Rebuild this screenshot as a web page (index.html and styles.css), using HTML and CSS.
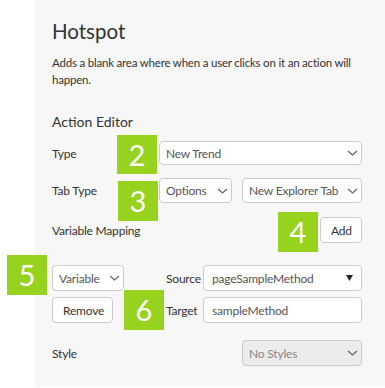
FILE: index.html
```html
<!DOCTYPE html>
<html lang="en">
<head>
  <meta charset="UTF-8" />
  <title>Hotspot</title>
  <link rel="stylesheet" href="styles.css">
</head>
<body>
  <div class="page">
    <div class="panel">
      <h1>Hotspot</h1>
      <p class="desc">Adds a blank area where when a user clicks on it an action will happen.</p>

      <h2>Action Editor</h2>

      <div class="row row-type">
        <label>Type</label>
        <div class="select wide"><span>New Trend</span><svg class="chev" viewBox="0 0 11 6"><path d="M1 1l4.5 4 4.5-4"/></svg></div>
      </div>

      <div class="row row-tab">
        <label>Tab Type</label>
        <div class="select small"><span>Options</span><svg class="chev" viewBox="0 0 11 6"><path d="M1 1l4.5 4 4.5-4"/></svg></div>
        <div class="select half"><span>New Explorer Tab</span><svg class="chev" viewBox="0 0 11 6"><path d="M1 1l4.5 4 4.5-4"/></svg></div>
      </div>

      <div class="row row-map">
        <label>Variable Mapping</label>
        <button class="btn">Add</button>
      </div>

      <div class="mapping">
        <div class="select var"><span>Variable</span><svg class="chev" viewBox="0 0 11 6"><path d="M1 1l4.5 4 4.5-4"/></svg></div>
        <label>Source</label>
        <div class="select src"><span>pageSampleMethod</span><svg class="tri" viewBox="0 0 8 7"><path d="M0 0h8l-4 7z"/></svg></div>
        <button class="btn">Remove</button>
        <label>Target</label>
        <div class="input">sampleMethod</div>
      </div>

      <div class="row row-style">
        <label>Style</label>
        <div class="select half disabled"><span>No Styles</span><svg class="chev" viewBox="0 0 11 6"><path d="M1 1l4.5 4 4.5-4"/></svg></div>
      </div>
    </div>

    <!-- numbered callouts -->
    <div class="callout c2">2</div>
    <div class="callout c3">3</div>
    <div class="callout c4">4</div>
    <div class="callout c5">5</div>
    <div class="callout c6">6</div>
  </div>
</body>
</html>
```

FILE: styles.css
```css
* { margin: 0; padding: 0; box-sizing: border-box; }
body {
  font-family: 'Lato', 'Open Sans', sans-serif;
  color: #333;
  background: #fff;
}
.page { position: relative; width: 385px; height: 388px; }
.panel {
  margin-left: 35px;
  height: 387px;
  background: #f7f7f7;
  padding: 17px 23px 0 17px;
}
h1 {
  font-size: 20.5px;
  font-weight: normal;
  line-height: 28px;
}
.desc {
  margin-top: 9px;
  font-size: 11.5px;
  letter-spacing: -0.2px;
  line-height: 17px;
}
h2 {
  margin-top: 24px;
  font-size: 14px;
  font-weight: normal;
  line-height: 20px;
}
.row {
  display: flex;
  align-items: center;
  font-size: 12px;
  letter-spacing: -0.2px;
}
.row label { width: 107px; }
.row-type { margin-top: 9px; }
.row-tab { margin-top: 13px; gap: 10px; }
.row-tab label { width: 97px; }
.row-map { margin-top: 14px; justify-content: space-between; }
.row-style { margin-top: 17px; justify-content: space-between; }

.select, .input {
  display: flex;
  align-items: center;
  justify-content: space-between;
  height: 26px;
  padding: 0 3px 0 6px;
  background: #fff;
  border: 1px solid #ccc;
  border-radius: 4px;
  font-size: 12px;
  letter-spacing: -0.2px;
  color: #555;
}
.row-type .select { height: 24px; }
.row-tab .select { height: 25px; }
.wide { width: 203px; }
.small { width: 73px; }
.half { width: 120px; }
.select.disabled { background: #ececec; color: #888; }
.chev { width: 11px; height: 6px; fill: none; stroke: #666; stroke-width: 1.3; }
.tri { width: 7px; height: 6px; fill: #222; margin-right: 5px; }
.mapping .src, .mapping .input { padding-left: 8px; }

.btn {
  height: 26px;
  padding: 0 10px;
  background: #fff;
  border: 1px solid #ccc;
  border-radius: 4px;
  font-family: inherit;
  font-size: 12px;
  letter-spacing: -0.2px;
  color: #333;
}
.row-map .btn { width: 42px; }

.mapping {
  margin-top: 22px;
  display: grid;
  grid-template-columns: 114px 37px 1fr;
  grid-auto-rows: 26px;
  row-gap: 6px;
  align-items: center;
  font-size: 12px;
  letter-spacing: -0.2px;
}
.mapping .var { width: 72px; }
.mapping .btn { width: 61px; }

.callout {
  position: absolute;
  width: 40px;
  height: 40px;
  background: #97d31e;
  color: #fff;
  font-size: 29px;
  line-height: 40px;
  text-align: center;
}
.c2 { left: 117px; top: 135px; height: 39px; line-height: 39px; }
.c3 { left: 118px; top: 181px; }
.c4 { left: 278px; top: 212px; }
.c5 { left: 7px; top: 255px; }
.c6 { left: 124px; top: 290px; }
```
